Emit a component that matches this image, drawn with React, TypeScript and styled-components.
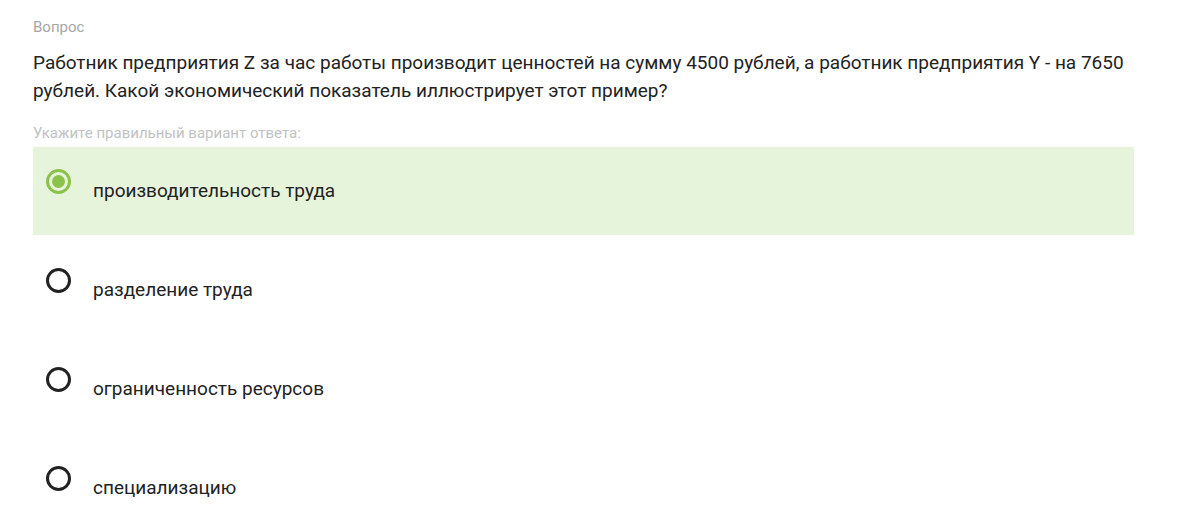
import * as React from "react";
import styled, { createGlobalStyle } from "styled-components";

const GlobalStyle = createGlobalStyle`
  html, body {
    margin: 0;
    padding: 0;
    background: #fff;
    font-family: Roboto, "Noto Sans", sans-serif;
  }
`;

const Page = styled.div`
  width: 1101px;
  padding: 17px 0 0 33px;
`;

const Caption = styled.div`
  font-size: 15px;
  line-height: 20px;
  color: #a6a6a6;
`;

const QuestionText = styled.div`
  margin-top: 12px;
  font-size: 19px;
  line-height: 28px;
  color: #222;
`;

const Hint = styled.div`
  margin-top: 18px;
  font-size: 15px;
  line-height: 20px;
  color: #c2c2c2;
`;

const Options = styled.div`
  display: flex;
  flex-direction: column;
  gap: 11px;
  margin-top: 4px;
`;

const Option = styled.label<{ selected: boolean }>`
  display: flex;
  align-items: flex-start;
  height: 88px;
  box-sizing: border-box;
  padding: 22px 0 0 13px;
  background: ${(p) => (p.selected ? "#e7f4dc" : "transparent")};
  cursor: pointer;
`;

const Radio = styled.span<{ selected: boolean }>`
  flex: none;
  width: 25px;
  height: 25px;
  box-sizing: border-box;
  border-radius: 50%;
  border: 3px solid ${(p) => (p.selected ? "#8bc34a" : "#222")};
  display: flex;
  align-items: center;
  justify-content: center;

  &::after {
    content: "";
    display: ${(p) => (p.selected ? "block" : "none")};
    width: 13px;
    height: 13px;
    border-radius: 50%;
    background: #8bc34a;
  }
`;

const OptionLabel = styled.span`
  margin-left: 22px;
  padding-top: 10px;
  font-size: 19px;
  line-height: 24px;
  color: #222;
`;

const answers = [
  "производительность труда",
  "разделение труда",
  "ограниченность ресурсов",
  "специализацию",
];

export default function App() {
  const [selected, setSelected] = React.useState(0);
  return (
    <>
      <GlobalStyle />
      <Page>
        <Caption>Вопрос</Caption>
        <QuestionText>
          Работник предприятия Z за час работы производит ценностей на сумму 4500 рублей, а работник
          предприятия Y - на 7650 рублей. Какой экономический показатель иллюстрирует этот пример?
        </QuestionText>
        <Hint>Укажите правильный вариант ответа:</Hint>
        <Options>
          {answers.map((a, i) => (
            <Option key={a} selected={i === selected} onClick={() => setSelected(i)}>
              <Radio selected={i === selected} />
              <OptionLabel>{a}</OptionLabel>
            </Option>
          ))}
        </Options>
      </Page>
    </>
  );
}
